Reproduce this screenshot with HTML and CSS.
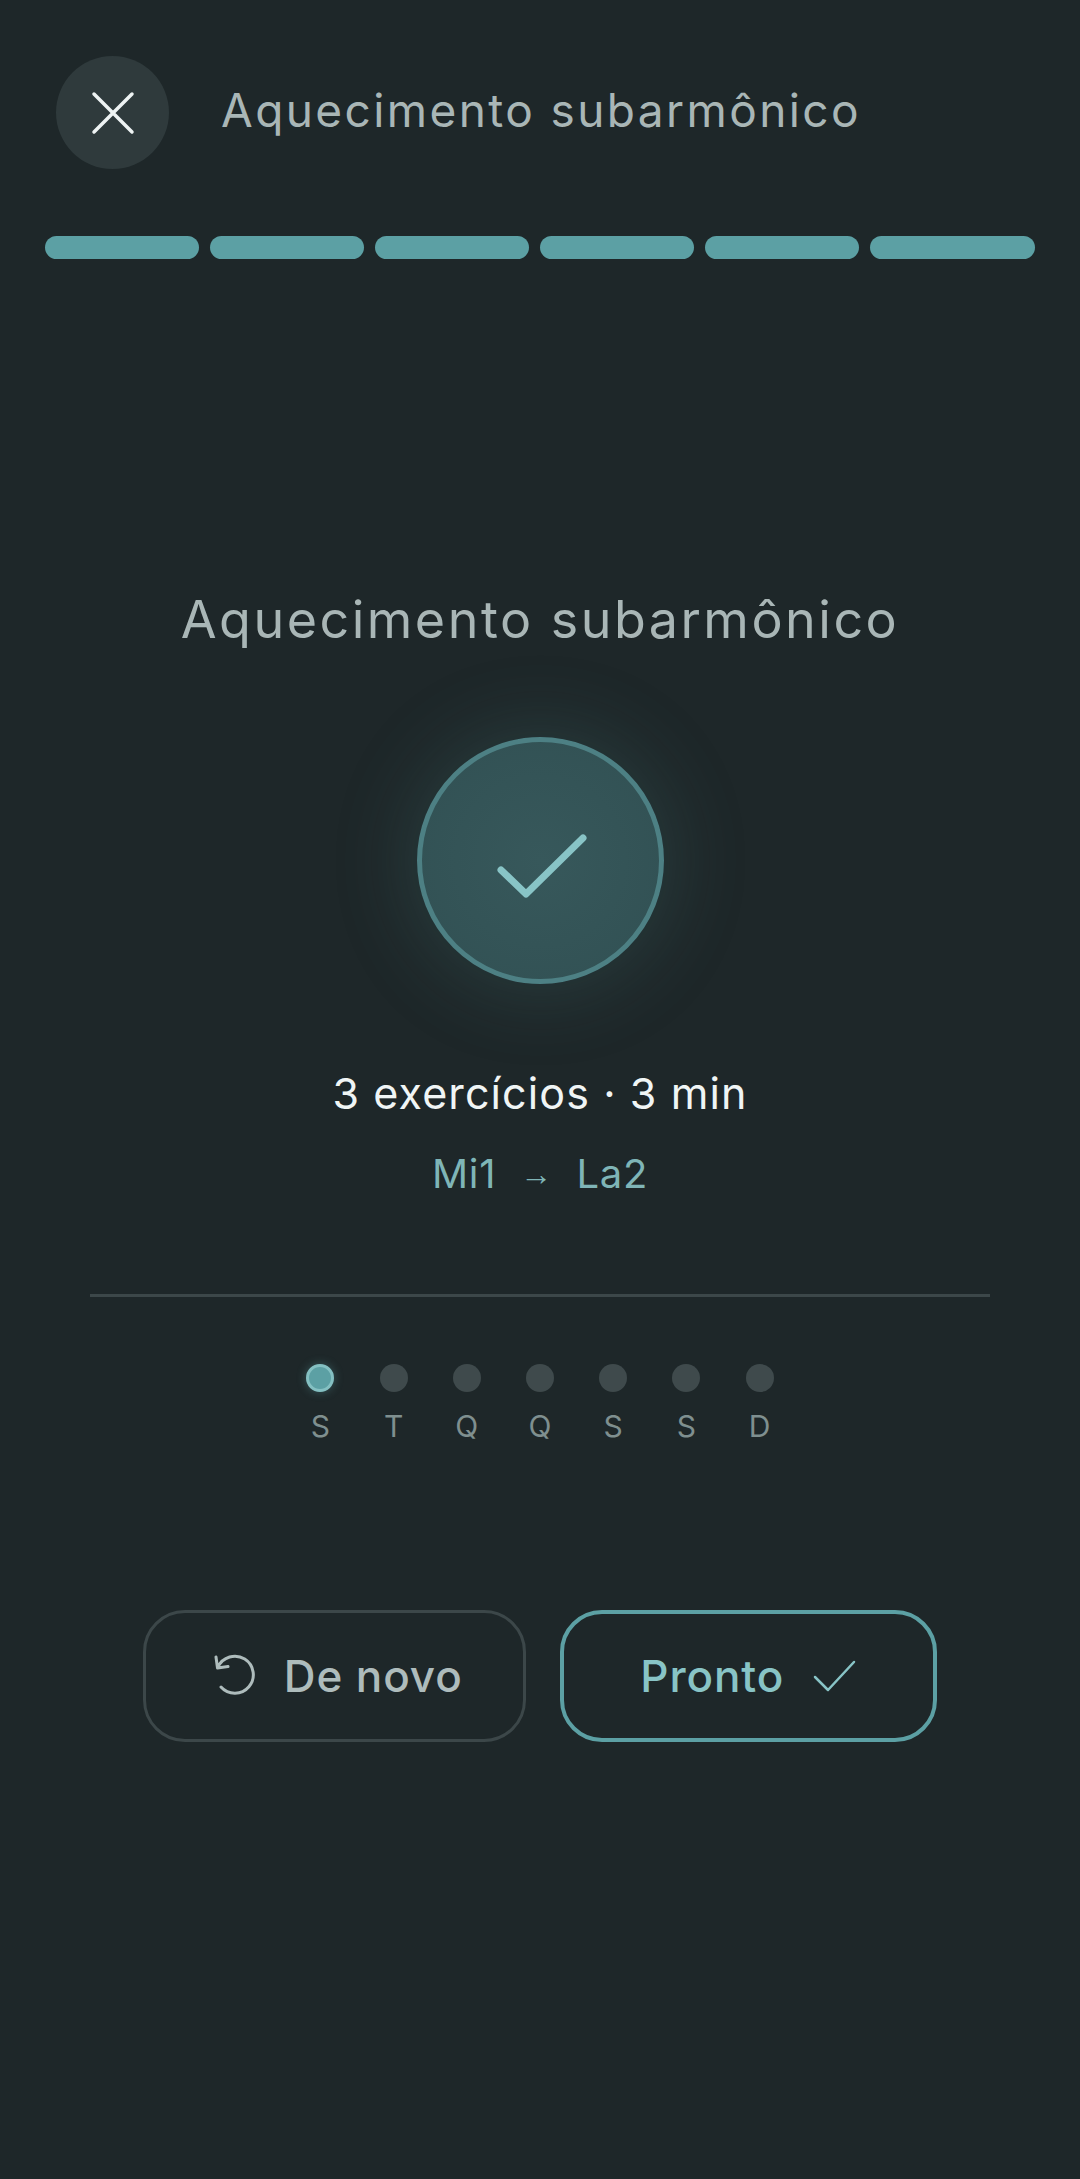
FILE: index.html
```html
<!DOCTYPE html>
<html lang="pt-BR">
<head>
	<meta charset="utf-8">
	<title>Aquecimento subarmônico</title>
	<link rel="stylesheet" href="styles.css">
</head>
<body>
	<div class="top">
		<div class="close">
			<svg width="48" height="48" viewBox="0 0 48 48"><path d="M5 5 L43 43 M43 5 L5 43" stroke="#eef3f3" stroke-width="3.500" stroke-linecap="round" fill="none"/></svg>
		</div>
		<div class="top-title">Aquecimento subarmônico</div>
	</div>

	<div class="bars">
		<div class="bar"></div>
		<div class="bar"></div>
		<div class="bar"></div>
		<div class="bar"></div>
		<div class="bar"></div>
		<div class="bar last"></div>
	</div>

	<h1>Aquecimento subarmônico</h1>

	<div class="badge">
		<svg width="96" height="80" viewBox="0 0 96 80"><path d="M9 49 L34 73 L91 17" stroke="#88c4c6" stroke-width="7" stroke-linecap="round" stroke-linejoin="round" fill="none"/></svg>
	</div>

	<div class="info">3 exercícios · 3 min</div>
	<div class="range"><span>Mi1</span><span class="arrow">→</span><span>La2</span></div>

	<hr class="line">

	<div class="days">
		<div class="day on"><i></i><span>S</span></div>
		<div class="day"><i></i><span>T</span></div>
		<div class="day"><i></i><span>Q</span></div>
		<div class="day"><i></i><span>Q</span></div>
		<div class="day"><i></i><span>S</span></div>
		<div class="day"><i></i><span>S</span></div>
		<div class="day"><i></i><span>D</span></div>
	</div>

	<div class="actions">
		<div class="btn again">
			<svg width="44" height="44" viewBox="0 0 44 44"><path d="M6 13 A18.500 18.500 0 1 1 9 33 M4 3 L5.500 14 L16 12.500" stroke="#aebcbc" stroke-width="3" stroke-linecap="round" stroke-linejoin="round" fill="none"/></svg>
			<span>De novo</span>
		</div>
		<div class="btn done">
			<span>Pronto</span>
			<svg width="44" height="32" viewBox="0 0 44 32"><path d="M3 17 L16 30 L42 2" stroke="#88c4c6" stroke-width="2.500" stroke-linecap="round" stroke-linejoin="round" fill="none"/></svg>
		</div>
	</div>
</body>
</html>
```

FILE: styles.css
```css
html {
	background: #1e2729;
}
body {
	margin: 0;
	height: 2179px;
	overflow: hidden;
	font-family: "Inter", "Noto Sans", sans-serif;
	background: #1e2729;
}
.top {
	display: flex;
	align-items: center;
	padding: 56px 0 0 56px;
}
.close {
	width: 113px;
	height: 113px;
	border-radius: 50%;
	background: #2f3a3c;
	display: flex;
	align-items: center;
	justify-content: center;
}
.top-title {
	margin-left: 52px;
	padding-bottom: 5px;
	font-size: 46px;
	letter-spacing: 2.400px;
	font-weight: 400;
	color: #a9b6b6;
	white-space: nowrap;
}
.bars {
	display: flex;
	gap: 11.500px;
	margin: 67px 45px 0 45px;
}
.bar {
	flex: 0 0 153.500px;
	height: 23px;
	border-radius: 12px;
	background: #5ca0a4;
}
.bar.last {
	flex: 1;
}
h1 {
	margin: 326px 0 0 0;
	text-align: center;
	font-size: 52px;
	letter-spacing: 2.500px;
	line-height: 70px;
	font-weight: 400;
	color: #a9b6b6;
}
.badge {
	box-sizing: border-box;
	width: 247px;
	height: 247px;
	margin: 82px auto 0 auto;
	border-radius: 50%;
	border: 5px solid #4d8084;
	background: radial-gradient(circle, #37585b 0%, #315053 100%);
	box-shadow: 0 0 80px 6px rgba(80, 140, 140, 0.22);
	display: flex;
	align-items: center;
	justify-content: center;
}
.info {
	margin-top: 82px;
	text-align: center;
	font-size: 43px;
	letter-spacing: 1.100px;
	line-height: 54px;
	color: #f0f5f5;
}
.range {
	margin-top: 27px;
	display: flex;
	justify-content: center;
	align-items: center;
	gap: 24px;
	font-size: 40px;
	letter-spacing: 0.600px;
	line-height: 54px;
	color: #7fb5b7;
}
.arrow {
	font-family: "Liberation Serif", serif;
	font-size: 32px;
}
.line {
	margin: 93px 90px 0 90px;
	border: 0;
	height: 3px;
	background: #3c4749;
}
.days {
	display: flex;
	justify-content: center;
	margin-top: 67px;
}
.day {
	width: 73.200px;
	display: flex;
	flex-direction: column;
	align-items: center;
	gap: 16px;
}
.day i {
	box-sizing: border-box;
	width: 28px;
	height: 28px;
	border-radius: 50%;
	background: #3f4a4c;
}
.day.on i {
	background: #5ca0a4;
	border: 3px solid #84c0c2;
	box-shadow: 0 0 10px rgba(92, 160, 164, 0.4);
}
.day span {
	font-size: 30px;
	line-height: 36px;
	color: #7f8f8f;
}
.actions {
	display: flex;
	gap: 34px;
	margin: 166px 143px 0 143px;
}
.btn {
	box-sizing: border-box;
	height: 132px;
	border-radius: 42px;
	display: flex;
	align-items: center;
	justify-content: center;
	font-size: 44px;
	letter-spacing: 0.900px;
	font-weight: 500;
}
.btn.again {
	width: 383px;
	gap: 28px;
	padding-left: 6px;
	border: 3px solid #3c4749;
	color: #aebcbc;
}
.btn.done {
	width: 378px;
	gap: 28px;
	border: 4px solid #5ca0a4;
	color: #88c4c6;
}
```
